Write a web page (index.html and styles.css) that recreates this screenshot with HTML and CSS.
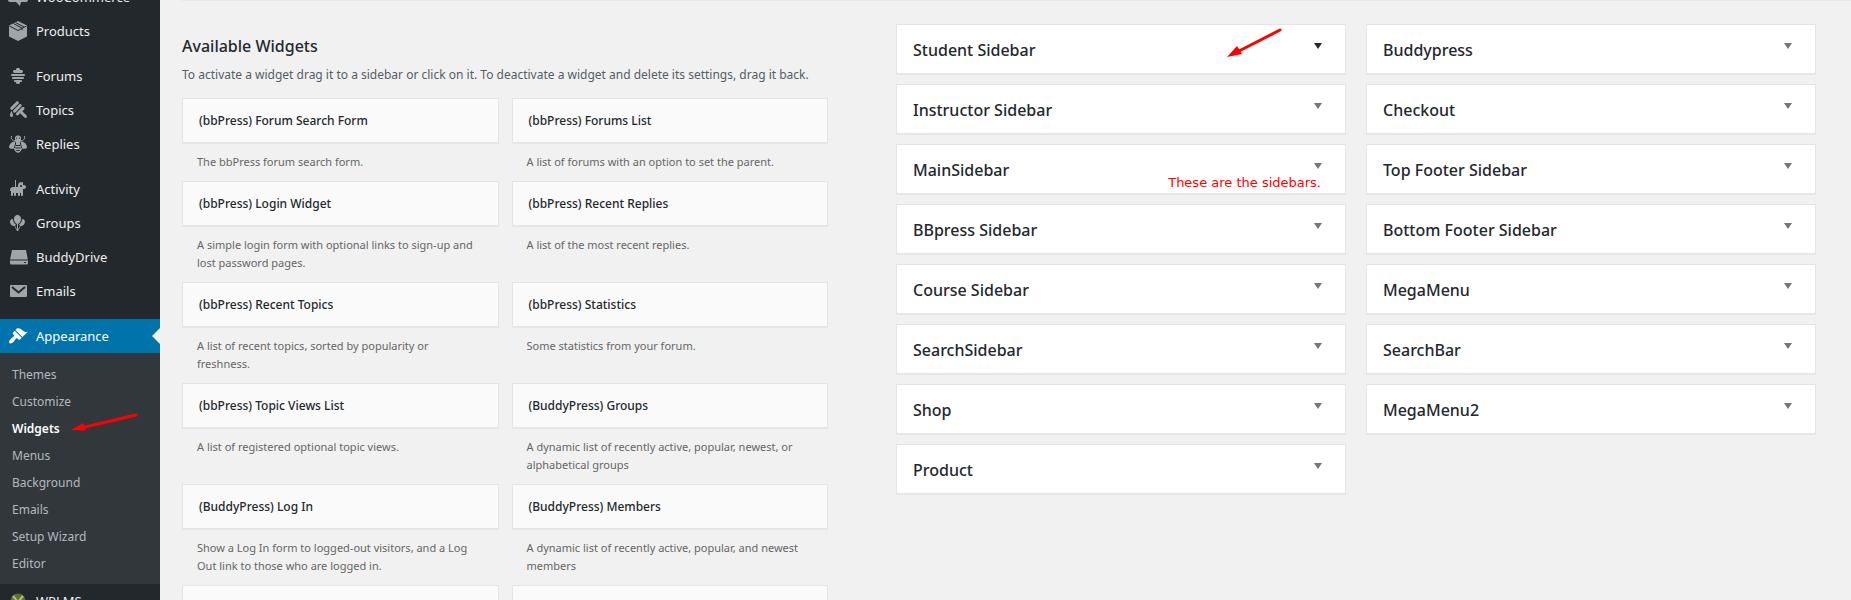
FILE: index.html
```html
<!DOCTYPE html>
<html lang="en">
<head>
<meta charset="utf-8">
<title>Widgets</title>
<link rel="stylesheet" href="styles.css">
</head>
<body>
<div class="admin">
  <nav class="menu" aria-label="Main menu">
    <ul class="menu-list">
      <li><a class="item" href="#"><svg class="icon" viewBox="0 0 20 20"><path d="M2 2h16a2 2 0 0 1 2 2v9a2 2 0 0 1-2 2h-5l-1 4-4-4H2a2 2 0 0 1-2-2V4a2 2 0 0 1 2-2z"/></svg>WooCommerce</a></li>
      <li><a class="item" href="#"><svg class="icon" viewBox="0 0 20 20"><path d="M10 0l9 4.500v11L10 20l-9-4.500v-11z"/><path class="cut" d="M1.500 5l8.500 4.500L18.500 5M5.500 2.500L14 7.200v2M7.500 1.500L16 6"/></svg>Products</a></li>
      <li class="gap"><a class="item" href="#"><svg class="icon" viewBox="0 0 20 20"><path d="M13.500 7h-7C5.670 7 5 6.330 5 5.500S5.670 4 6.500 4h1.590C8.040 3.840 8 3.680 8 3.500 8 2.670 8.670 2 9.500 2h1c.83 0 1.500.67 1.500 1.500 0 .18-.04.34-.09.5h1.590c.83 0 1.500.67 1.500 1.500S14.330 7 13.500 7zM4 8h12c.55 0 1 .45 1 1s-.45 1-1 1H4c-.55 0-1-.45-1-1s.45-1 1-1zm1 3h10c.55 0 1 .45 1 1s-.45 1-1 1H5c-.55 0-1-.45-1-1s.45-1 1-1zm2 3h6c.55 0 1 .45 1 1s-.45 1-1 1h-1.090c.05.16.09.32.09.5 0 .83-.67 1.500-1.500 1.500h-1c-.83 0-1.500-.67-1.500-1.500 0-.18.04-.34.09-.5H7c-.55 0-1-.45-1-1s.45-1 1-1z"/></svg>Forums</a></li>
      <li><a class="item" href="#"><svg class="icon" viewBox="0 0 20 20"><path d="M10.440 1.660c-.59-.58-1.540-.58-2.120 0L2.660 7.320c-.58.58-.58 1.530 0 2.120.6.6 1.560.56 2.120 0l5.660-5.660c.58-.58.59-1.530 0-2.120zm2.830 2.830c-.59-.59-1.540-.59-2.120 0l-5.660 5.660c-.59.58-.59 1.530 0 2.120.6.6 1.560.55 2.120 0l5.660-5.660c.58-.58.58-1.530 0-2.120zm1.060 6.720l4.180 4.180c.59.58.59 1.530 0 2.120s-1.540.59-2.120 0l-4.180-4.180-1.770 1.770c-.59.58-1.540.58-2.120 0-.59-.59-.59-1.540 0-2.130l5.660-5.650c.58-.59 1.530-.59 2.120 0 .58.58.58 1.530 0 2.120zM5 15c0-1.590-1.660-4-1.660-4S2 13.780 2 15s.6 2 1.340 2h.32C4.400 17 5 16.590 5 15z"/></svg>Topics</a></li>
      <li><a class="item" href="#"><svg class="icon" viewBox="0 0 20 20"><path d="M7 3.500C7.500 2 8.600 1.500 10 1.500s2.500.5 3 2V6c1 .3 1.500.9 1.500 1.800C17 8.500 19 11 19 13c0 1.500-2 2.200-5 1.500-.3 2-2 4-4 4.500-2-.5-3.700-2.500-4-4.500-3 .7-5 0-5-1.500 0-2 2-4.500 4.500-5.200C5.500 6.900 6 6.300 7 6z"/><path class="leg" d="M5.500 6.500C3.500 5.500 3 4.500 3.500 2M14.500 6.500c2-1 2.500-2 2-4.500"/><path class="cut" d="M8 4.200h1M11 4.200h1M6.500 7.500l1.500 1M13.500 7.500l-1.500 1M8 11.500h4M7.500 14h5M8.300 16.500h3.400M7.600 9L6.500 14M12.400 9l1.100 5"/></svg>Replies</a></li>
      <li class="gap"><a class="item" href="#"><svg class="icon" viewBox="0 0 20 20"><path d="M8 1v7h2V6c0-1.520 1.450-3 3-3v.86c.55-.52 1.260-.86 2-.86v3h1c1.100 0 2 .9 2 2s-.9 2-2 2h-1v6c0 .55-.45 1-1 1s-1-.45-1-1v-2.180c-.31.11-.65.18-1 .18v2c0 .55-.45 1-1 1s-1-.45-1-1v-2H8v2c0 .55-.45 1-1 1s-1-.45-1-1v-2c-.35 0-.69-.07-1-.18V16c0 .55-.45 1-1 1s-1-.45-1-1v-4H2v-1c0-1.660 1.340-3 3-3h2V1h1zm5 7c.55 0 1-.45 1-1s-.45-1-1-1-1 .45-1 1 .45 1 1 1z"/></svg>Activity</a></li>
      <li><a class="item" href="#"><svg class="icon" viewBox="0 0 20 20"><path d="M15.450 6.250c1.830.94 1.980 3.180.7 4.980-.8 1.120-2.330 1.880-3.460 1.780L10.050 18H9l-2.650-4.990c-1.130.16-2.730-.63-3.550-1.790-1.280-1.800-1.130-4.040.71-4.970.48-.24.96-.33 1.430-.31-.01.4.01.8.07 1.210.26 1.690 1.410 3.530 2.860 4.370-.19.55-.49.99-.88 1.250L9 16.580v-5.660C7.640 10.550 6.260 8.760 6 7c-.4-2.650 1-5 3.500-5s3.900 2.350 3.500 5c-.26 1.760-1.640 3.550-3 3.920v5.770l2.070-3.840c-.44-.23-.77-.71-.99-1.300 1.480-.83 2.650-2.690 2.910-4.400.06-.41.08-.82.07-1.220.46-.01.92.08 1.390.32z"/></svg>Groups</a></li>
      <li><a class="item" href="#"><svg class="icon" viewBox="0 0 20 20"><path d="M4 3h14l1.800 9.500H2zM2 13.500h18v2.500a1.500 1.500 0 0 1-1.500 1.500h-15A1.500 1.500 0 0 1 2 16z"/><path class="cut" d="M16 15.500h2"/></svg>BuddyDrive</a></li>
      <li><a class="item" href="#"><svg class="icon" viewBox="0 0 20 20"><path d="M3 4h15a1 1 0 0 1 1 1v10a1 1 0 0 1-1 1H3a1 1 0 0 1-1-1V5a1 1 0 0 1 1-1z"/><path class="cut flap" d="M4 6l6.500 5.500L17 6"/></svg>Emails</a></li>
      <li class="gap"><a class="item current" href="#"><svg class="icon" viewBox="0 0 20 20"><path d="M14.480 11.060L7.410 3.990l1.500-1.500c.5-.56 2.300-.47 3.510.32 1.210.8 1.430 1.280 2.910 2.100 1.180.64 2.450 1.260 4.450.85zm-.71.71L6.700 4.700 4.930 6.470c-.39.39-.39 1.020 0 1.410l1.060 1.060c.39.39.39 1.030 0 1.420-.6.6-1.430 1.110-2.210 1.690-.35.26-.7.53-1.010.84C1.430 14.230.4 16.080 1.400 17.070c.99 1 2.840-.03 4.180-1.360.31-.31.58-.66.85-1.020.57-.78 1.080-1.610 1.690-2.210.39-.39 1.020-.39 1.410 0l1.060 1.060c.39.39 1.020.39 1.410 0z"/></svg>Appearance</a>
        <ul class="submenu">
          <li><a href="#">Themes</a></li>
          <li><a href="#">Customize</a></li>
          <li class="active"><a href="#">Widgets</a><svg class="arrow menu-arrow" viewBox="0 0 68 20"><path class="shaft" d="M65 3L12 15.500"/><path d="M0 18l12-7 3 7.500z"/></svg></li>
          <li><a href="#">Menus</a></li>
          <li><a href="#">Background</a></li>
          <li><a href="#">Emails</a></li>
          <li><a href="#">Setup Wizard</a></li>
          <li><a href="#">Editor</a></li>
        </ul>
      </li>
      <li><a class="item" href="#"><svg class="icon" viewBox="0 0 20 20"><circle class="badge" cx="10" cy="10" r="7.500"/><path class="badge-mark" d="M5 5l5 6 5-6M10 11v6"/></svg>WPLMS</a></li>
    </ul>
  </nav>
  <main class="content">
    <section class="available">
      <h2 class="heading">Available Widgets</h2>
      <p class="intro">To activate a widget drag it to a sidebar or click on it. To deactivate a widget and delete its settings, drag it back.</p>
      <div class="widgets">
        <article><h3 class="widget">(bbPress) Forum Search Form</h3><p class="desc">The bbPress forum search form.</p></article>
        <article><h3 class="widget">(bbPress) Forums List</h3><p class="desc">A list of forums with an option to set the parent.</p></article>
        <article><h3 class="widget">(bbPress) Login Widget</h3><p class="desc">A simple login form with optional links to sign-up and lost password pages.</p></article>
        <article><h3 class="widget">(bbPress) Recent Replies</h3><p class="desc">A list of the most recent replies.</p></article>
        <article><h3 class="widget">(bbPress) Recent Topics</h3><p class="desc">A list of recent topics, sorted by popularity or freshness.</p></article>
        <article><h3 class="widget">(bbPress) Statistics</h3><p class="desc">Some statistics from your forum.</p></article>
        <article><h3 class="widget">(bbPress) Topic Views List</h3><p class="desc">A list of registered optional topic views.</p></article>
        <article><h3 class="widget">(BuddyPress) Groups</h3><p class="desc">A dynamic list of recently active, popular, newest, or alphabetical groups</p></article>
        <article><h3 class="widget">(BuddyPress) Log In</h3><p class="desc">Show a Log In form to logged-out visitors, and a Log Out link to those who are logged in.</p></article>
        <article><h3 class="widget">(BuddyPress) Members</h3><p class="desc">A dynamic list of recently active, popular, and newest members</p></article>
        <article><h3 class="widget"></h3></article>
        <article><h3 class="widget"></h3></article>
      </div>
    </section>
    <section class="sidebars">
      <div class="column">
        <div class="holder"><button class="sidebar hover" type="button">Student Sidebar</button><svg class="arrow box-arrow" viewBox="0 0 56 32"><path class="shaft" d="M53 3L12 24"/><path d="M0 30l10-11 5 8z"/></svg></div>
        <button class="sidebar" type="button">Instructor Sidebar</button>
        <div class="holder"><button class="sidebar" type="button">MainSidebar</button><span class="note">These are the sidebars.</span></div>
        <button class="sidebar" type="button">BBpress Sidebar</button>
        <button class="sidebar" type="button">Course Sidebar</button>
        <button class="sidebar" type="button">SearchSidebar</button>
        <button class="sidebar" type="button">Shop</button>
        <button class="sidebar" type="button">Product</button>
      </div>
      <div class="column">
        <button class="sidebar" type="button">Buddypress</button>
        <button class="sidebar" type="button">Checkout</button>
        <button class="sidebar" type="button">Top Footer Sidebar</button>
        <button class="sidebar" type="button">Bottom Footer Sidebar</button>
        <button class="sidebar" type="button">MegaMenu</button>
        <button class="sidebar" type="button">SearchBar</button>
        <button class="sidebar" type="button">MegaMenu2</button>
      </div>
    </section>
  </main>
</div>
</body>
</html>
```
FILE: styles.css
```css
* { box-sizing: border-box; }
body {
  margin: 0;
  background: #f1f1f1;
  color: #23282d;
  font-family: "Noto Sans", "Open Sans", sans-serif;
  font-size: 13px;
}
h2, h3, p, ul { margin: 0; padding: 0; }
ul { list-style: none; }
a { text-decoration: none; }

.admin { display: flex; height: 100vh; overflow: hidden; }

.menu {
  flex: 0 0 160px;
  overflow: hidden;
  background: #23282d;
}
.menu-list { margin-top: -20px; }
.gap { margin-top: 11px; }
.item {
  display: flex;
  align-items: center;
  gap: 8px;
  height: 34px;
  padding-left: 8px;
  color: #eee;
}
.icon { width: 20px; height: 20px; fill: #a0a5aa; }
.cut { fill: none; stroke: #23282d; stroke-width: 1; }
.flap { stroke-width: 2; }
.leg { fill: none; stroke: #a0a5aa; stroke-width: 1; }
.badge { fill: #5d7428; }
.badge-mark { fill: none; stroke: #b5bf8a; stroke-width: 2; }
.current {
  position: relative;
  background: #0073aa;
  color: #fff;
}
.current .icon { fill: #fff; }
.current::after {
  content: "";
  position: absolute;
  right: 0;
  top: 9px;
  border: 8px solid transparent;
  border-left-width: 0;
  border-right-color: #f1f1f1;
}
.submenu { padding: 8px 0 7px; background: #32373c; }
.submenu li { position: relative; height: 27px; padding-left: 12px; }
.submenu a { color: #b4b9be; font-size: 12px; line-height: 27px; }
.submenu .active a { color: #fff; font-weight: 600; }

.arrow { position: absolute; fill: #f00; }
.shaft { stroke: #f00; stroke-width: 3; stroke-linecap: round; }
.menu-arrow { left: 71px; top: -3px; width: 68px; height: 20px; }
.box-arrow { right: 63px; top: 3px; width: 56px; height: 32px; }

.content {
  flex: 1;
  display: grid;
  grid-template-columns: 646fr 920fr;
  align-items: start;
  gap: 68px;
  margin-left: 22px;
  padding-right: 35px;
  border-top: 1px solid #e8e8e8;
}
.heading { margin-top: 32px; font-size: 16px; font-weight: 500; line-height: 26px; }
.intro { margin: 6px 0 13px; color: #555d66; font-size: 12px; line-height: 20px; white-space: nowrap; }
.widgets { display: grid; grid-template-columns: 1fr 1fr; column-gap: 13px; }
.widget {
  height: 45px;
  padding: 0 16px;
  border: 1px solid #e5e5e5;
  background: #fafafa;
  box-shadow: 0 1px 1px rgba(0, 0, 0, 0.04);
  font-size: 12px;
  font-weight: 500;
  line-height: 44px;
}
.desc { padding: 10px 15px; color: #666; font-size: 11px; line-height: 18px; }

.sidebars { display: grid; grid-template-columns: 1fr 1fr; align-items: start; gap: 20px; padding-top: 23px; }
.column { display: grid; gap: 10px; }
.holder { position: relative; display: grid; }
.sidebar {
  display: flex;
  justify-content: space-between;
  align-items: center;
  height: 50px;
  padding: 2px 23px 0 16px;
  border: 1px solid #e5e5e5;
  background: #fff;
  box-shadow: 0 1px 1px rgba(0, 0, 0, 0.04);
  color: #23282d;
  font: 500 16px "Noto Sans", "Open Sans", sans-serif;
  text-align: left;
}
.sidebar::after {
  content: "";
  margin-bottom: 8px;
  border: 4px solid transparent;
  border-top: 6px solid #72777c;
  border-bottom: 0;
}
.hover::after { border-top-color: #23282d; }
.note {
  position: absolute;
  right: 25px;
  bottom: 4px;
  color: #f00;
  font: 13px "DejaVu Sans", sans-serif;
}
```
